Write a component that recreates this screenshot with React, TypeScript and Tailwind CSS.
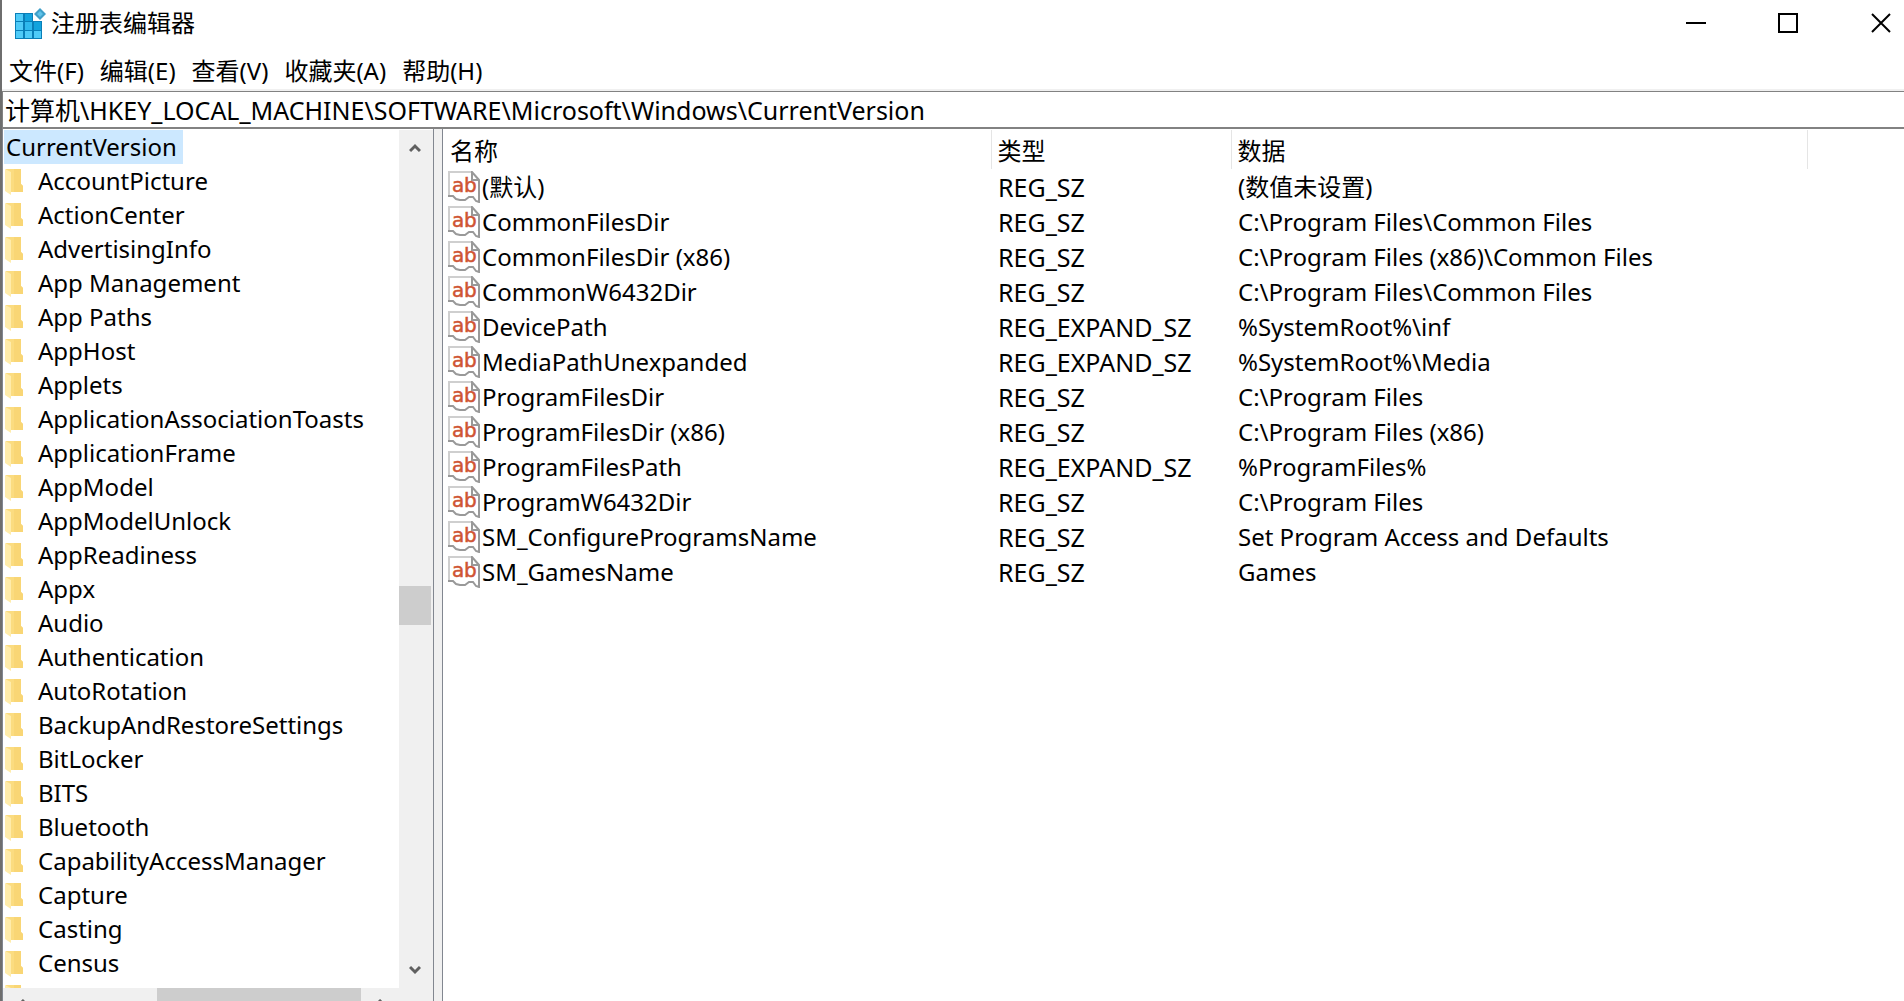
import React from 'react';

interface RegistryValue {
    name: string;
    type: string;
    data: string;
}

const MENU = ['文件(F)', '编辑(E)', '查看(V)', '收藏夹(A)', '帮助(H)'];

const KEYS = [
    'AccountPicture',
    'ActionCenter',
    'AdvertisingInfo',
    'App Management',
    'App Paths',
    'AppHost',
    'Applets',
    'ApplicationAssociationToasts',
    'ApplicationFrame',
    'AppModel',
    'AppModelUnlock',
    'AppReadiness',
    'Appx',
    'Audio',
    'Authentication',
    'AutoRotation',
    'BackupAndRestoreSettings',
    'BitLocker',
    'BITS',
    'Bluetooth',
    'CapabilityAccessManager',
    'Capture',
    'Casting',
    'Census',
];

const VALUES: RegistryValue[] = [
    { name: '(默认)', type: 'REG_SZ', data: '(数值未设置)' },
    { name: 'CommonFilesDir', type: 'REG_SZ', data: 'C:\\Program Files\\Common Files' },
    { name: 'CommonFilesDir (x86)', type: 'REG_SZ', data: 'C:\\Program Files (x86)\\Common Files' },
    { name: 'CommonW6432Dir', type: 'REG_SZ', data: 'C:\\Program Files\\Common Files' },
    { name: 'DevicePath', type: 'REG_EXPAND_SZ', data: '%SystemRoot%\\inf' },
    { name: 'MediaPathUnexpanded', type: 'REG_EXPAND_SZ', data: '%SystemRoot%\\Media' },
    { name: 'ProgramFilesDir', type: 'REG_SZ', data: 'C:\\Program Files' },
    { name: 'ProgramFilesDir (x86)', type: 'REG_SZ', data: 'C:\\Program Files (x86)' },
    { name: 'ProgramFilesPath', type: 'REG_EXPAND_SZ', data: '%ProgramFiles%' },
    { name: 'ProgramW6432Dir', type: 'REG_SZ', data: 'C:\\Program Files' },
    { name: 'SM_ConfigureProgramsName', type: 'REG_SZ', data: 'Set Program Access and Defaults' },
    { name: 'SM_GamesName', type: 'REG_SZ', data: 'Games' },
];

const RegeditIcon = () => (
    <svg width="32" height="32" viewBox="0 -1 32 32" aria-hidden="true">
        <path d="M0 5h18v8h9v18H0z" fill="#0a7fb8" />
        <path d="M1 6h7v7H1zM1 14h7v8H1zM1 23h7v7H1zM10 23h7v7h-7zM19 23h7v7h-7z" fill="#4fcbf8" />
        <path d="M10 6h7v7h-7zM19 14h7v8h-7z" fill="#12a3dd" />
        <path d="M10 14h7v8h-7z" fill="#2fb9ee" />
        <path d="M25 0l6 6-6 6-6-6z" fill="#3f9fc9" />
        <path d="M25 3l3 3-3 3-3-3z" fill="#5fc3ea" />
    </svg>
);

const FolderIcon = () => (
    <svg width="18" height="28" viewBox="0 -2 18 28" className="shrink-0" aria-hidden="true">
        <path d="M1 0h15v15l2 2v6H2z" fill="#fbdc80" />
        <path d="M9 0h7v15l2 2v6H9z" fill="#f9d675" />
        <path d="M0 0l6 3v23l-6-4z" fill="#ffecab" />
    </svg>
);

const StringIcon = () => (
    <svg width="32" height="32" viewBox="0 0 32 32" className="shrink-0" aria-hidden="true">
        <path d="M1 1h22l8 8v22l-4-2-4-2-5 2-5 1-5-4H1z" fill="#fff" />
        <path d="M1 25V1h22" fill="none" stroke="#cfcfcf" strokeWidth="2" />
        <path d="M0 25h5l3 3 4 1h5l4-3h4l3 4 3 1V9l-7-8v8h7" fill="none" stroke="#999" strokeWidth="2" />
        <text x="4 16" y="21" fill="#cf5433" stroke="#cf5433" strokeWidth="0.5" fontSize="20" fontFamily="DejaVu Sans">
            ab
        </text>
    </svg>
);

const Arrow = ({ className = '' }: { className?: string }) => (
    <svg width="12" height="10" viewBox="0 0 12 10" className={className} aria-hidden="true">
        <path d="M1 8l5-5 5 5" fill="none" stroke="#606060" strokeWidth="3" />
    </svg>
);

const TitleBar = () => (
    <header className="flex h-[46px] shrink-0 items-center pl-[13px]">
        <RegeditIcon />
        <h1 className="ml-1">注册表编辑器</h1>
        <div className="ml-auto flex h-full">
            <button aria-label="最小化" className="flex w-[92px] items-center justify-center">
                <svg width="20" height="20" viewBox="0 0 20 20">
                    <path d="M0 10h20" stroke="#000" strokeWidth="2" />
                </svg>
            </button>
            <button aria-label="最大化" className="flex w-[92px] items-center justify-center">
                <svg width="20" height="20" viewBox="0 0 20 20">
                    <path d="M1 1h18v18H1z" fill="none" stroke="#000" strokeWidth="2" />
                </svg>
            </button>
            <button aria-label="关闭" className="flex w-[70px] items-center justify-center pl-6">
                <svg width="20" height="20" viewBox="0 0 20 20">
                    <path d="M1 1l18 18M19 1L1 19" stroke="#000" strokeWidth="2" />
                </svg>
            </button>
        </div>
    </header>
);

const KeyTree = () => (
    <aside className="flex w-[431px] shrink-0 flex-col border-r border-[#828790]">
        <div className="flex min-h-0 flex-1">
            <ul className="min-w-0 flex-1 overflow-hidden whitespace-nowrap pl-px pt-px">
                <li className="flex h-[34px]">
                    <button className="bg-[#cce8ff] pl-0.5 pr-1.5">CurrentVersion</button>
                </li>
                {KEYS.map((key) => (
                    <li key={key} className="flex h-[34px] items-center gap-[15px] pl-px">
                        <FolderIcon />
                        <span>{key}</span>
                    </li>
                ))}
                <li className="flex h-[34px] items-center pl-px">
                    <FolderIcon />
                </li>
            </ul>
            <div className="mt-px flex w-[34px] flex-col items-center bg-[#f0f0f0] pr-0.5">
                <Arrow className="my-[13px]" />
                <div className="w-full flex-[421]" />
                <div className="h-[39px] w-full bg-[#cdcdcd]" />
                <div className="w-full flex-[327]" />
                <Arrow className="my-[13px] rotate-180" />
            </div>
        </div>
        {/* horizontal scrollbar runs past the bottom of the window */}
        <div className="h-[13px] shrink-0 overflow-hidden bg-[#f0f0f0] pl-px">
            <div className="flex h-[34px] items-center pr-[34px]">
                <Arrow className="mx-[11px] -rotate-90" />
                <div className="flex-[119]" />
                <div className="h-full flex-[203] bg-[#cdcdcd]" />
                <div className="flex-[4]" />
                <Arrow className="mx-[11px] rotate-90" />
            </div>
        </div>
    </aside>
);

const ValueList = () => (
    <main className="min-w-0 flex-1 overflow-hidden border-l border-[#828790] pt-px">
        <table className="w-full table-fixed text-left">
            <colgroup>
                <col className="w-[548px]" />
                <col className="w-[240px]" />
                <col className="w-[576px]" />
                <col />
            </colgroup>
            <thead>
                <tr className="h-[39px]">
                    <th className="border-r border-[#e5e5e5] p-0 pl-[7px] pt-0.5 font-normal">名称</th>
                    <th className="border-r border-[#e5e5e5] p-0 pl-1.5 pt-0.5 font-normal">类型</th>
                    <th className="border-r border-[#e5e5e5] p-0 pl-1.5 pt-0.5 font-normal">数据</th>
                    <td />
                </tr>
            </thead>
            <tbody className="whitespace-nowrap">
                {VALUES.map((value) => (
                    <tr key={value.name} className="h-[35px]">
                        <td className="p-0 pl-[5px]">
                            <div className="flex items-center gap-0.5">
                                <StringIcon />
                                <span>{value.name}</span>
                            </div>
                        </td>
                        <td className="p-0 pl-[7px] text-[25px]">{value.type}</td>
                        <td className="p-0 pl-[7px]">{value.data}</td>
                        <td />
                    </tr>
                ))}
            </tbody>
        </table>
    </main>
);

export default function App() {
    return (
        <div className="flex h-screen flex-col overflow-hidden border-l-2 border-[#6e6e6e] bg-white font-['Noto_Sans','Noto_Sans_CJK_SC',sans-serif] text-[24px] leading-[34px] text-black">
            <TitleBar />
            <nav className="flex h-[43px] shrink-0 items-center gap-4 pl-[7px] pt-1.5">
                {MENU.map((item) => (
                    <button key={item}>{item}</button>
                ))}
            </nav>
            <div className="shrink-0 border-t-2 border-[#f0f0f0]">
                <input
                    aria-label="地址"
                    defaultValue="计算机\HKEY_LOCAL_MACHINE\SOFTWARE\Microsoft\Windows\CurrentVersion"
                    className="block h-[38px] w-full border-b-2 border-l border-t border-[#828282] pb-0.5 pl-0.5 text-[25px] outline-none"
                />
            </div>
            <div className="flex min-h-0 flex-1 border-l border-[#828790] bg-[#f0f0f0]">
                <div className="flex min-w-0 flex-1 gap-2 [&>*]:bg-white">
                    <KeyTree />
                    <ValueList />
                </div>
            </div>
        </div>
    );
}
